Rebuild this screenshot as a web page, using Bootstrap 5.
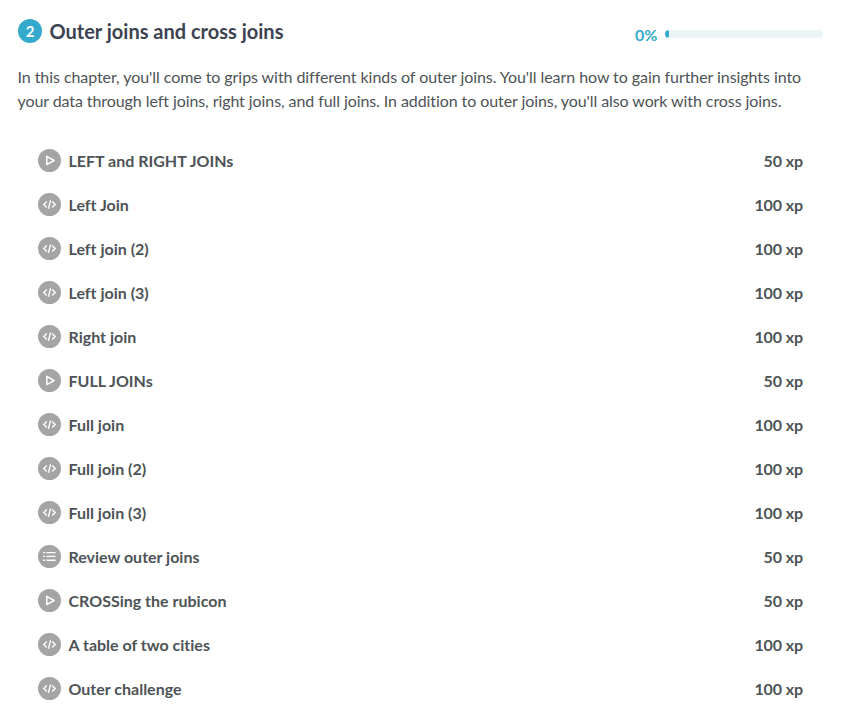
<!DOCTYPE html>
<html lang="en"><head><meta charset="utf-8"><title>Outer joins and cross joins</title>
<link href="https://cdn.jsdelivr.net/npm/bootstrap@5.3.0/dist/css/bootstrap.min.css" rel="stylesheet">
<style>
body{font-family:Lato,"Liberation Sans",sans-serif;color:#4d5356;font-size:16px;overflow:hidden;font-variant-ligatures:none}
.chapter{padding:18px 18px 0 18px}
.chapter-head{height:27px}
.chapter-num{width:24px;height:24px;background:#33aacc;font-size:15px;margin:0 7.5px 1px 0}
.chapter-title{font-size:20px;line-height:27px;color:#3d4251}
.pct{color:#33aacc;font-size:16px;line-height:24px;margin:2px 7.5px 0 0}
.track{width:158px;height:8px;background:#ebf4f6;border-radius:4px}
.track .progress-bar{background:#33aacc;border-radius:4px}
.intro{line-height:24px;margin-top:20px;margin-left:-.5px;letter-spacing:-.082px}
.intro-first{letter-spacing:-.067px}
.lessons{margin:26px 20px 0}
.lesson{height:44px;line-height:24px}
.xp{letter-spacing:-.1px}
.ico{width:23px;height:23px;margin:0 7.5px 1px 0}
</style></head><body>
<svg class="d-none" aria-hidden="true">
<symbol id="i-play" viewBox="0 0 23 23"><circle cx="11.5" cy="11.5" r="11.5" fill="#a4a4a4"/><path d="M8.8 7.4v8.2l7.3-4.1z" fill="none" stroke="#fff" stroke-width="1.5" stroke-linejoin="round"/></symbol>
<symbol id="i-code" viewBox="0 0 23 23"><circle cx="11.5" cy="11.5" r="11.5" fill="#a4a4a4"/><path d="M8.8 8.6 5.8 11.6l3 3M14.2 8.6l3 3-3 3M12.6 7.3l-2.2 8.6" fill="none" stroke="#fff" stroke-width="1.4"/></symbol>
<symbol id="i-list" viewBox="0 0 23 23"><circle cx="11.5" cy="11.5" r="11.5" fill="#a4a4a4"/><path d="M5.2 7.6H7M5.2 11.4H7M5.2 15.2H7M8.3 7.6h9.2M8.3 11.4h9.2M8.3 15.2h9.2" fill="none" stroke="#fff" stroke-width="1.4"/></symbol>
</svg>
<main class="chapter">
<header class="chapter-head d-flex align-items-center justify-content-between">
<div class="d-flex align-items-center"><span class="chapter-num rounded-circle text-white fw-bold d-flex align-items-center justify-content-center">2</span><h1 class="chapter-title fw-bold mb-0">Outer joins and cross joins</h1></div>
<div class="d-flex align-items-center pt-1"><span class="pct fw-bold">0%</span><div class="progress track"><div class="progress-bar" style="width:2.5%"></div></div></div>
</header>
<p class="intro mb-0"><span class="intro-first">In this chapter, you'll come to grips with different kinds of outer joins. You'll learn how to gain further insights into</span><br>your data through left joins, right joins, and full joins. In addition to outer joins, you'll also work with cross joins.</p>
<ul class="lessons list-unstyled mb-0 fw-bold">
<li class="lesson d-flex align-items-center"><svg class="ico"><use href="#i-play"/></svg><span>LEFT and RIGHT JOINs</span><span class="xp ms-auto">50 xp</span></li>
<li class="lesson d-flex align-items-center"><svg class="ico"><use href="#i-code"/></svg><span>Left Join</span><span class="xp ms-auto">100 xp</span></li>
<li class="lesson d-flex align-items-center"><svg class="ico"><use href="#i-code"/></svg><span>Left join (2)</span><span class="xp ms-auto">100 xp</span></li>
<li class="lesson d-flex align-items-center"><svg class="ico"><use href="#i-code"/></svg><span>Left join (3)</span><span class="xp ms-auto">100 xp</span></li>
<li class="lesson d-flex align-items-center"><svg class="ico"><use href="#i-code"/></svg><span>Right join</span><span class="xp ms-auto">100 xp</span></li>
<li class="lesson d-flex align-items-center"><svg class="ico"><use href="#i-play"/></svg><span>FULL JOINs</span><span class="xp ms-auto">50 xp</span></li>
<li class="lesson d-flex align-items-center"><svg class="ico"><use href="#i-code"/></svg><span>Full join</span><span class="xp ms-auto">100 xp</span></li>
<li class="lesson d-flex align-items-center"><svg class="ico"><use href="#i-code"/></svg><span>Full join (2)</span><span class="xp ms-auto">100 xp</span></li>
<li class="lesson d-flex align-items-center"><svg class="ico"><use href="#i-code"/></svg><span>Full join (3)</span><span class="xp ms-auto">100 xp</span></li>
<li class="lesson d-flex align-items-center"><svg class="ico"><use href="#i-list"/></svg><span>Review outer joins</span><span class="xp ms-auto">50 xp</span></li>
<li class="lesson d-flex align-items-center"><svg class="ico"><use href="#i-play"/></svg><span>CROSSing the rubicon</span><span class="xp ms-auto">50 xp</span></li>
<li class="lesson d-flex align-items-center"><svg class="ico"><use href="#i-code"/></svg><span>A table of two cities</span><span class="xp ms-auto">100 xp</span></li>
<li class="lesson d-flex align-items-center"><svg class="ico"><use href="#i-code"/></svg><span>Outer challenge</span><span class="xp ms-auto">100 xp</span></li>
</ul>
</main>
<script src="https://cdn.jsdelivr.net/npm/bootstrap@5.3.0/dist/js/bootstrap.bundle.min.js"></script>
</body></html>
